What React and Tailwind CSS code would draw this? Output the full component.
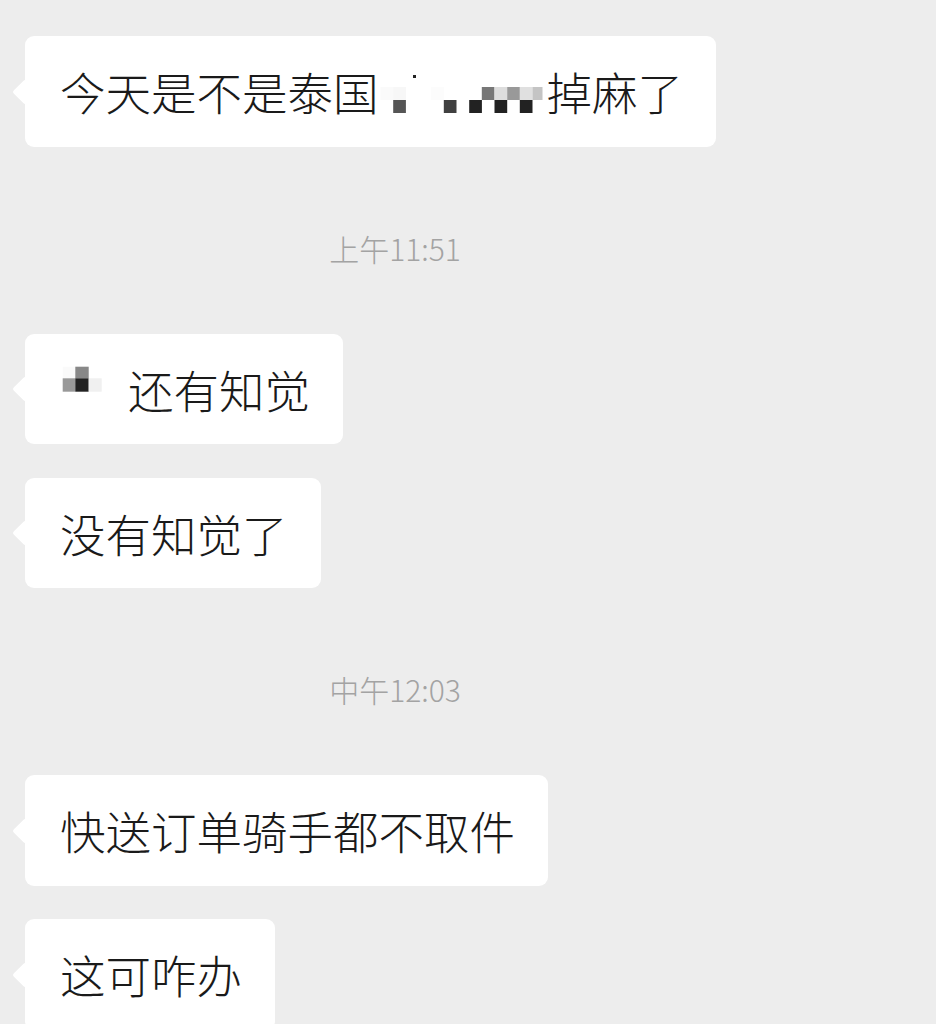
import React from "react";

const font = { fontFamily: '"Noto Sans CJK SC", "Noto Sans", sans-serif' };

// pixelated blur blocks, [x, y, w, h, color]
const mosaicOne = [
  [1.5, 28, 12.7, 13, "#fafafa"],
  [14.2, 28, 12.7, 13, "#f7f7f7"],
  [52.2, 28, 12.7, 13, "#fcfcfc"],
  [102.8, 28, 12.7, 13, "#777777"],
  [115.5, 28, 12.7, 13, "#dddddd"],
  [128.2, 28, 12.7, 13, "#999999"],
  [140.8, 28, 12.7, 13, "#e0e0e0"],
  [153.5, 28, 10, 13, "#c4c4c4"],
  [14.2, 41, 12.7, 13, "#555555"],
  [64.8, 41, 12.7, 13, "#404040"],
  [90.2, 41, 12.7, 13, "#222222"],
  [115.5, 41, 12.7, 13, "#222222"],
  [140.8, 41, 12.7, 13, "#222222"],
  [34, 16, 3, 3, "#222222"],
];

const mosaicTwo = [
  [2.7, 9.7, 12.7, 11.6, "#fafafa"],
  [15.3, 9.7, 13.4, 11.6, "#888888"],
  [2.7, 21.3, 12.7, 13.4, "#999999"],
  [15.3, 21.3, 13.4, 13.4, "#222222"],
  [28.7, 21.3, 13, 13.4, "#f0f0f0"],
];

const Mosaic = ({ width, cells }) => (
  <svg width={width} height="65" className="shrink-0">
    {cells.map((c, i) => (
      <rect key={i} x={c[0]} y={c[1]} width={c[2]} height={c[3]} fill={c[4]} />
    ))}
  </svg>
);

const Bubble = ({ children, tall }) => (
  <div
    className={
      "relative shrink-0 self-start ml-[25px] bg-white rounded-[9px] pl-[35px] pr-[33px] flex items-center " +
      (tall ? "h-[111px]" : "h-[110px]")
    }
  >
    <div className="absolute left-[-9px] top-1/2 -translate-y-1/2 w-[18px] h-[18px] rotate-45 rounded-[2px] bg-white"></div>
    <div className="relative flex items-center h-[65px] text-[45.5px] leading-[65px] font-light text-[#1a1a1a] whitespace-nowrap">
      {children}
    </div>
  </div>
);

const Time = ({ text }) => (
  <div className="shrink-0 w-[790px] h-[40px] mt-[81px] mb-[66px] text-center text-[30px] leading-[40px] font-light text-[#a3a3a3]">
    {text}
  </div>
);

const App = () => {
  return (
    <div
      className="w-[936px] h-[1024px] overflow-hidden bg-[#ededed] flex flex-col pt-[36px]"
      style={font}
    >
      <Bubble tall>
        <span>今天是不是泰国</span>
        <Mosaic width={168} cells={mosaicOne} />
        <span>掉麻了</span>
      </Bubble>

      <Time text="上午11:51" />

      <Bubble>
        <Mosaic width={68} cells={mosaicTwo} />
        <span>还有知觉</span>
      </Bubble>

      <div className="shrink-0 h-[34px]"></div>

      <Bubble>
        <span>没有知觉了</span>
      </Bubble>

      <Time text="中午12:03" />

      <Bubble tall>
        <span>快送订单骑手都不取件</span>
      </Bubble>

      <div className="shrink-0 h-[33px]"></div>

      <Bubble tall>
        <span>这可咋办</span>
      </Bubble>
    </div>
  );
};

export default App;
